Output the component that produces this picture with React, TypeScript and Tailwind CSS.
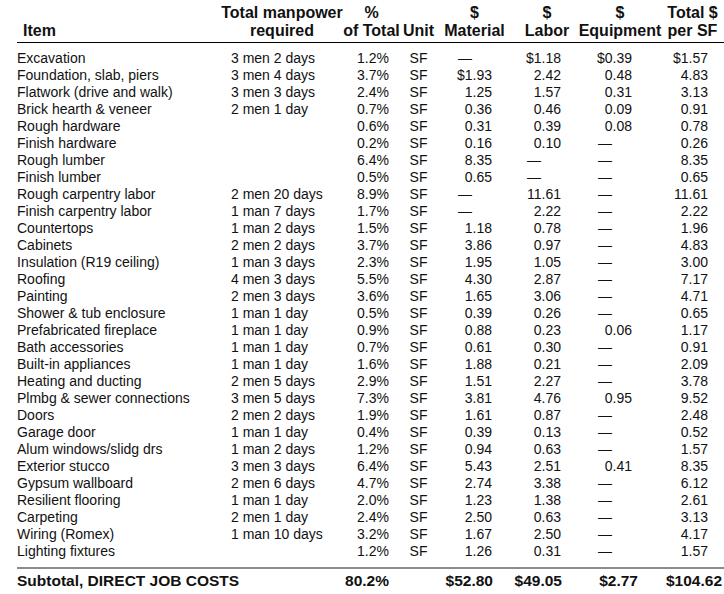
import React from "react";

type Row = [string, string, string, string, string, string, string];

const rows: Row[] = [
  ["Excavation", "3 men 2 days", "1.2%", "—", "$1.18", "$0.39", "$1.57"],
  ["Foundation, slab, piers", "3 men 4 days", "3.7%", "$1.93", "2.42", "0.48", "4.83"],
  ["Flatwork (drive and walk)", "3 men 3 days", "2.4%", "1.25", "1.57", "0.31", "3.13"],
  ["Brick hearth & veneer", "2 men 1 day", "0.7%", "0.36", "0.46", "0.09", "0.91"],
  ["Rough hardware", "", "0.6%", "0.31", "0.39", "0.08", "0.78"],
  ["Finish hardware", "", "0.2%", "0.16", "0.10", "—", "0.26"],
  ["Rough lumber", "", "6.4%", "8.35", "—", "—", "8.35"],
  ["Finish lumber", "", "0.5%", "0.65", "—", "—", "0.65"],
  ["Rough carpentry labor", "2 men 20 days", "8.9%", "—", "11.61", "—", "11.61"],
  ["Finish carpentry labor", "1 man 7 days", "1.7%", "—", "2.22", "—", "2.22"],
  ["Countertops", "1 man 2 days", "1.5%", "1.18", "0.78", "—", "1.96"],
  ["Cabinets", "2 men 2 days", "3.7%", "3.86", "0.97", "—", "4.83"],
  ["Insulation (R19 ceiling)", "1 man 3 days", "2.3%", "1.95", "1.05", "—", "3.00"],
  ["Roofing", "4 men 3 days", "5.5%", "4.30", "2.87", "—", "7.17"],
  ["Painting", "2 men 3 days", "3.6%", "1.65", "3.06", "—", "4.71"],
  ["Shower & tub enclosure", "1 man 1 day", "0.5%", "0.39", "0.26", "—", "0.65"],
  ["Prefabricated fireplace", "1 man 1 day", "0.9%", "0.88", "0.23", "0.06", "1.17"],
  ["Bath accessories", "1 man 1 day", "0.7%", "0.61", "0.30", "—", "0.91"],
  ["Built-in appliances", "1 man 1 day", "1.6%", "1.88", "0.21", "—", "2.09"],
  ["Heating and ducting", "2 men 5 days", "2.9%", "1.51", "2.27", "—", "3.78"],
  ["Plmbg & sewer connections", "3 men 5 days", "7.3%", "3.81", "4.76", "0.95", "9.52"],
  ["Doors", "2 men 2 days", "1.9%", "1.61", "0.87", "—", "2.48"],
  ["Garage door", "1 man 1 day", "0.4%", "0.39", "0.13", "—", "0.52"],
  ["Alum windows/slidg drs", "1 man 2 days", "1.2%", "0.94", "0.63", "—", "1.57"],
  ["Exterior stucco", "3 men 3 days", "6.4%", "5.43", "2.51", "0.41", "8.35"],
  ["Gypsum wallboard", "2 men 6 days", "4.7%", "2.74", "3.38", "—", "6.12"],
  ["Resilient flooring", "1 man 1 day", "2.0%", "1.23", "1.38", "—", "2.61"],
  ["Carpeting", "2 men 1 day", "2.4%", "2.50", "0.63", "—", "3.13"],
  ["Wiring (Romex)", "1 man 10 days", "3.2%", "1.67", "2.50", "—", "4.17"],
  ["Lighting fixtures", "", "1.2%", "1.26", "0.31", "—", "1.57"],
];

const numPr = ["pr-[20px]", "pr-[21px]", "pr-[34px]", "pr-[16px]"];
const dashPr = ["pr-[40px]", "pr-[41px]", "pr-[54px]", "pr-[36px]"];

const grid =
  "grid grid-cols-[198px_128px_57px_37px_75px_70px_84px_58px]";

function HeadCell({ top, bottom, extra = "" }: { top?: string; bottom: string; extra?: string }) {
  return (
    <div className={`flex flex-col items-center justify-end whitespace-nowrap ${extra}`}>
      <div className="h-[18px]">{top ?? ""}</div>
      <div className="h-[18px]">{bottom}</div>
    </div>
  );
}

export default function App() {
  return (
    <div className="w-[724px] h-[594px] bg-white text-[#111] font-['Liberation_Sans',Arial,Helvetica,sans-serif] text-[14px] pl-[17px] overflow-hidden">
      {/* Header */}
      <div className={`${grid} font-bold text-[16px] leading-[18px] pt-[4px] pb-[2px] border-b border-black`}>
        <div className="flex flex-col justify-end pl-[6px]">
          <div className="h-[18px]">Item</div>
        </div>
        <HeadCell top="Total manpower" bottom="required" extra="pl-[6px]" />
        <HeadCell top="%" bottom="of Total" />
        <HeadCell bottom="Unit" />
        <HeadCell top="$" bottom="Material" />
        <HeadCell top="$" bottom="Labor" />
        <HeadCell top="$" bottom="Equipment" extra="pr-[8px]" />
        <HeadCell top="Total $" bottom="per SF" extra="pr-[5px]" />
      </div>

      {/* Body */}
      <div className="pt-[7px] pb-[7px] border-b-2 border-[#8c8c8c] leading-[17px]">
        {rows.map((r, i) => (
          <div key={i} className={`${grid} h-[17px] whitespace-nowrap`}>
            <div>{r[0]}</div>
            <div className="pl-[16px]">{r[1]}</div>
            <div className="text-right pr-[11px]">{r[2]}</div>
            <div className="text-center">SF</div>
            {[r[3], r[4], r[5], r[6]].map((v, j) => (
              <div key={j} className={`text-right ${v === "—" ? dashPr[j] : numPr[j]}`}>
                {v}
              </div>
            ))}
          </div>
        ))}
      </div>

      {/* Subtotal */}
      <div className={`${grid} font-bold text-[15.5px] leading-[20px] pt-[2px] whitespace-nowrap`}>
        <div className="col-span-2">Subtotal, DIRECT JOB COSTS</div>
        <div className="text-right pr-[11px]">80.2%</div>
        <div></div>
        <div className="text-right pr-[19px]">$52.80</div>
        <div className="text-right pr-[20px]">$49.05</div>
        <div className="text-right pr-[28px]">$2.77</div>
        <div className="text-right pr-[6px]">$104.62</div>
      </div>
    </div>
  );
}
